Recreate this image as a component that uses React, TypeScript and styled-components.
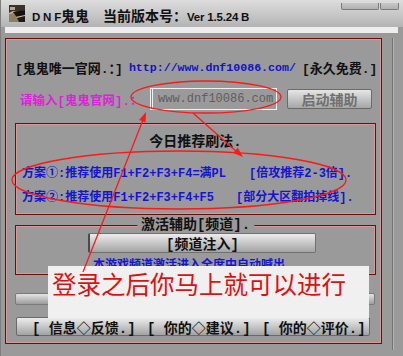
import React from 'react';
import styled, { createGlobalStyle } from 'styled-components';

const GlobalStyle = createGlobalStyle`
  body {
    margin: 0;
    background: #9a9a9a;
  }
`;

const CJK = `"Noto Sans CJK SC", "Liberation Sans", sans-serif`;
const MONO = `"Liberation Mono", "Noto Sans CJK SC", monospace`;

const App = () => {
  return (
    <Window>
      <GlobalStyle />
      <TitleBar>
        <AppIcon />
        <Title>
          <Latin>D N F</Latin>鬼鬼<Gap />当前版本号：<Latin>Ver 1.5.24 B</Latin>
        </Title>
        <Controls>
          <CtrlButton $w={38} />
          <CtrlButton $w={19} />
        </Controls>
      </TitleBar>
      <Strip />

      <Body>
        <Frame>
          <SiteRow>
            <span>[鬼鬼唯一官网.：]</span>
            <Url>http://www.dnf10086.com/</Url>
            <span>[永久免费.]</span>
          </SiteRow>

          <InputRow>
            <Prompt>请输入[鬼鬼官网].：</Prompt>
            <Field>www.dnf10086.com</Field>
            <StartButton>启动辅助</StartButton>
          </InputRow>

          <TipsBox>
            <TipsTitle>今日推荐刷法.</TipsTitle>
            <PlanLine $gap={23}>
              <span>方案①:推荐使用F1+F2+F3+F4=满PL</span>
              <span>[倍攻推荐2-3倍].</span>
            </PlanLine>
            <PlanLine $gap={22} $top={8}>
              <span>方案②:推荐使用F1+F2+F3+F4+F5</span>
              <span>[部分大区翻拍掉线].</span>
            </PlanLine>
          </TipsBox>

          <ChannelBox>
            <Legend>激活辅助[频道].</Legend>
            <ChannelButton>[频道注入]</ChannelButton>
            <Hint>本游戏频道激活进入全席中自动喊出</Hint>
          </ChannelBox>

          <Progress />

          <Footer>
            <FooterItem>[ 信息◇反馈.]</FooterItem>
            <FooterItem>[ 你的◇建议.]</FooterItem>
            <FooterItem>[ 你的◇评价.]</FooterItem>
          </Footer>
        </Frame>
        <SideRail />
      </Body>

      <Caption>登录之后你马上就可以进行</Caption>
      <Marks />
    </Window>
  );
};

const AppIcon = () => (
  <svg width="16" height="17" viewBox="0 0 16 17">
    <rect width="16" height="17" fill="#cbbb98" />
    <polygon points="0,0 16,0 16,5 10,7 4,6 0,8" fill="#3a332b" />
    <polygon points="4,7 16,5 16,10 6,12" fill="#14110e" />
    <polygon points="0,9 5,8 8,13 16,11 16,17 0,17" fill="#8f7e60" />
    <polygon points="8,13 16,11 16,17 10,17" fill="#1e1a15" />
    <rect x="1" y="2" width="5" height="3" fill="#b9a57e" />
  </svg>
);

const Marks = () => (
  <Annotations width="403" height="356" viewBox="0 0 403 356">
    <g fill="none" stroke="#ff1818" strokeWidth="1.3">
      <ellipse cx="205" cy="97" rx="75" ry="16" />
      <ellipse cx="178" cy="180" rx="167" ry="29" />
      <line x1="192" y1="113" x2="236" y2="152" />
      <line x1="82" y1="272" x2="142" y2="120" />
    </g>
    <g fill="#ff1818">
      <polygon points="242,157 232.2,153 236.8,147.8" />
      <polygon points="145,112 144.6,122.6 138.1,120" />
    </g>
  </Annotations>
);

const Window = styled.div`
  position: relative;
  width: 403px;
  height: 356px;
  box-sizing: border-box;
  background: #9a9a9a;
  border-left: 1px solid #7e7e7e;
  display: flex;
  flex-direction: column;
  overflow: hidden;
  font-family: ${CJK};
`;

const TitleBar = styled.div`
  height: 27px;
  display: flex;
  align-items: center;
  padding-left: 8px;
  background: linear-gradient(#dddddd, #b4b4b4);
`;

const Title = styled.div`
  margin-left: 7px;
  padding-top: 2px;
  font-size: 14px;
  font-weight: 700;
  color: #111;
  white-space: pre;
`;

const Latin = styled.span`
  font-family: "Liberation Sans", sans-serif;
  font-size: 11.5px;
  letter-spacing: -0.2px;
`;

const Gap = styled.span`
  display: inline-block;
  width: 14px;
`;

const Controls = styled.div`
  margin-left: auto;
  margin-right: 4px;
  align-self: flex-start;
  margin-top: 3px;
  display: flex;
  gap: 1px;
`;

const CtrlButton = styled.div<{ $w: number }>`
  width: ${(p) => p.$w}px;
  height: 7px;
  box-sizing: border-box;
  border: 1px solid #7a7a7a;
  border-top: none;
  border-radius: 0 0 2px 2px;
  background: linear-gradient(#c8c8c8, #b0b0b0);
`;

const Strip = styled.div`
  height: 6px;
  margin: 0 5px 0 4px;
  background: #eeeeee;
`;

const Body = styled.div`
  flex: 1;
  display: flex;
  padding-top: 5px;
`;

const Frame = styled.div`
  width: 377px;
  height: 306px;
  margin-left: 4px;
  box-sizing: border-box;
  border: 1px solid #6e0b0b;
  box-shadow: inset 0 0 0 1px #d69a9a;
  padding: 20px 5px 0 9px;
  display: flex;
  flex-direction: column;
`;

const SideRail = styled.div`
  width: 1px;
  margin: 0 0 6px 10px;
  background: #737373;
  box-shadow: 1px 0 0 #b4b4b4;
`;

const SiteRow = styled.div`
  height: 16px;
  display: flex;
  align-items: center;
  gap: 6px;
  font-family: ${MONO};
  font-size: 13px;
  font-weight: 700;
  color: #111;
  white-space: pre;
`;

const Url = styled.span`
  font-size: 11.6px;
  color: #1212c8;
`;

const InputRow = styled.div`
  margin-top: 13px;
  height: 22px;
  display: flex;
  align-items: center;
  padding-left: 5px;
`;

const Prompt = styled.span`
  width: 122px;
  font-family: ${MONO};
  font-size: 12.5px;
  font-weight: 700;
  color: #dd22dd;
  white-space: pre;
`;

const Field = styled.div`
  margin-left: 8px;
  width: 127px;
  height: 22px;
  box-sizing: border-box;
  border: 1px solid #f0f0f0;
  box-shadow: inset 1px 0 0 #8a8a8a, inset 2px 0 0 #f0f0f0;
  padding-left: 7px;
  display: flex;
  align-items: center;
  font-family: ${MONO};
  font-size: 12px;
  color: #5e5e5e;
`;

const StartButton = styled.div`
  margin-left: 10px;
  width: 85px;
  height: 20px;
  box-sizing: border-box;
  border: 1px solid #6a6a6a;
  border-radius: 2px;
  background: linear-gradient(#e6e6e6, #c2c2c2 55%, #a6a6a6);
  display: flex;
  align-items: center;
  justify-content: center;
  font-size: 14px;
  font-weight: 700;
  color: #707070;
`;

const TipsBox = styled.div`
  margin-top: 13px;
  height: 92px;
  box-sizing: border-box;
  border: 1px solid #6e0b0b;
  box-shadow: inset 0 0 0 1px #d69a9a;
  padding-top: 9px;
  display: flex;
  flex-direction: column;
`;

const TipsTitle = styled.div`
  height: 18px;
  line-height: 18px;
  text-align: center;
  font-family: ${MONO};
  font-size: 14px;
  font-weight: 700;
  color: #111;
`;

const PlanLine = styled.div<{ $gap: number; $top?: number }>`
  margin-top: ${(p) => p.$top ?? 13}px;
  height: 16px;
  padding-left: 6px;
  display: flex;
  align-items: center;
  gap: ${(p) => p.$gap}px;
  font-family: ${MONO};
  font-size: 12px;
  font-weight: 700;
  color: #1414d2;
  white-space: pre;
`;

const ChannelBox = styled.div`
  position: relative;
  margin-top: 10px;
  height: 50px;
  box-sizing: border-box;
  border: 1px solid #6e0b0b;
  box-shadow: inset 0 0 0 1px #d69a9a;
  padding-top: 7px;
`;

const Legend = styled.div`
  position: absolute;
  top: -9px;
  left: 50%;
  transform: translateX(-50%);
  padding: 0 4px;
  background: #9a9a9a;
  font-family: ${MONO};
  font-size: 14px;
  font-weight: 700;
  line-height: 16px;
  color: #111;
  white-space: pre;
`;

const ChannelButton = styled.div`
  margin-left: 72px;
  width: 228px;
  height: 20px;
  box-sizing: border-box;
  border: 1px solid #707070;
  border-left: 2px solid #4a4a4a;
  border-radius: 2px;
  background: linear-gradient(#ececec, #c4c4c4 55%, #a4a4a4);
  display: flex;
  align-items: center;
  justify-content: center;
  font-family: ${MONO};
  font-size: 14px;
  font-weight: 700;
  color: #111;
`;

const Hint = styled.div`
  margin-top: 3px;
  padding-left: 77px;
  font-size: 12px;
  font-weight: 700;
  line-height: 16px;
  color: #1414d2;
`;

const Progress = styled.div`
  margin-top: 18px;
  width: 360px;
  height: 12px;
  box-sizing: border-box;
  border: 1px solid #7a7a7a;
  border-radius: 2px;
  background: linear-gradient(#e4e4e4, #bdbdbd 55%, #9c9c9c);
`;

const Footer = styled.div`
  margin: 12px 0 0 1px;
  width: 354px;
  height: 19px;
  box-sizing: border-box;
  border: 1px solid #6a6a6a;
  border-radius: 2px;
  background: linear-gradient(#ececec, #c4c4c4 55%, #a2a2a2);
  padding-left: 15px;
  display: flex;
  align-items: center;
`;

const FooterItem = styled.span`
  width: 115px;
  flex-shrink: 0;
  font-family: ${MONO};
  font-size: 14px;
  font-weight: 700;
  color: #111;
  white-space: pre;
`;

const Caption = styled.div`
  position: absolute;
  left: 47px;
  top: 266px;
  width: 321px;
  height: 52px;
  box-sizing: border-box;
  background: #f0f0f0;
  padding: 3px 0 0 4px;
  font-size: 24.5px;
  line-height: 30px;
  color: #dd1111;
  white-space: pre;
`;

const Annotations = styled.svg`
  position: absolute;
  left: 0;
  top: 0;
  pointer-events: none;
`;

export default App;
